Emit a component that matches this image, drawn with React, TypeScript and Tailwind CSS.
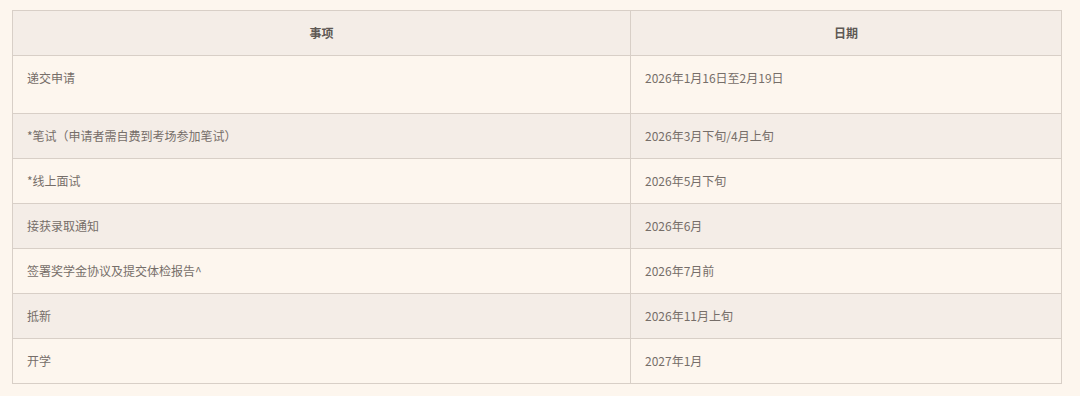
const rows: { item: string; date: string; tall?: boolean }[] = [
  { item: '递交申请', date: '2026年1月16日至2月19日', tall: true },
  { item: '*笔试（申请者需自费到考场参加笔试）', date: '2026年3月下旬/4月上旬' },
  { item: '*线上面试', date: '2026年5月下旬' },
  { item: '接获录取通知', date: '2026年6月' },
  { item: '签署奖学金协议及提交体检报告^', date: '2026年7月前' },
  { item: '抵新', date: '2026年11月上旬' },
  { item: '开学', date: '2027年1月' },
]

export default function App() {
  return (
    <div
      className="w-[1080px] h-[396px] bg-[#fdf6ee] pt-[10px] pl-[12px]"
      style={{ fontFamily: '"Noto Sans CJK SC", "Noto Sans", sans-serif' }}
    >
      <table className="w-[1050px] border-collapse border border-[#d8cfc7] text-[12px] text-[#766e69]">
        <thead>
          <tr className="h-[45px] bg-[#f4ede7]">
            <th className="w-[618px] border border-[#d8cfc7] text-center font-bold text-[#5e5854]">事项</th>
            <th className="border border-[#d8cfc7] text-center font-bold text-[#5e5854]">日期</th>
          </tr>
        </thead>
        <tbody>
          {rows.map((r, i) => (
            <tr
              key={r.item}
              className={`${r.tall ? 'h-[58px]' : 'h-[45px]'} ${i % 2 === 1 ? 'bg-[#f4ede7]' : 'bg-[#fdf6ee]'}`}
            >
              <td className="border border-[#d8cfc7] px-[14px] pt-[13px] align-top leading-[18px]">{r.item}</td>
              <td className="border border-[#d8cfc7] px-[14px] pt-[13px] align-top leading-[18px]">{r.date}</td>
            </tr>
          ))}
        </tbody>
      </table>
    </div>
  )
}
